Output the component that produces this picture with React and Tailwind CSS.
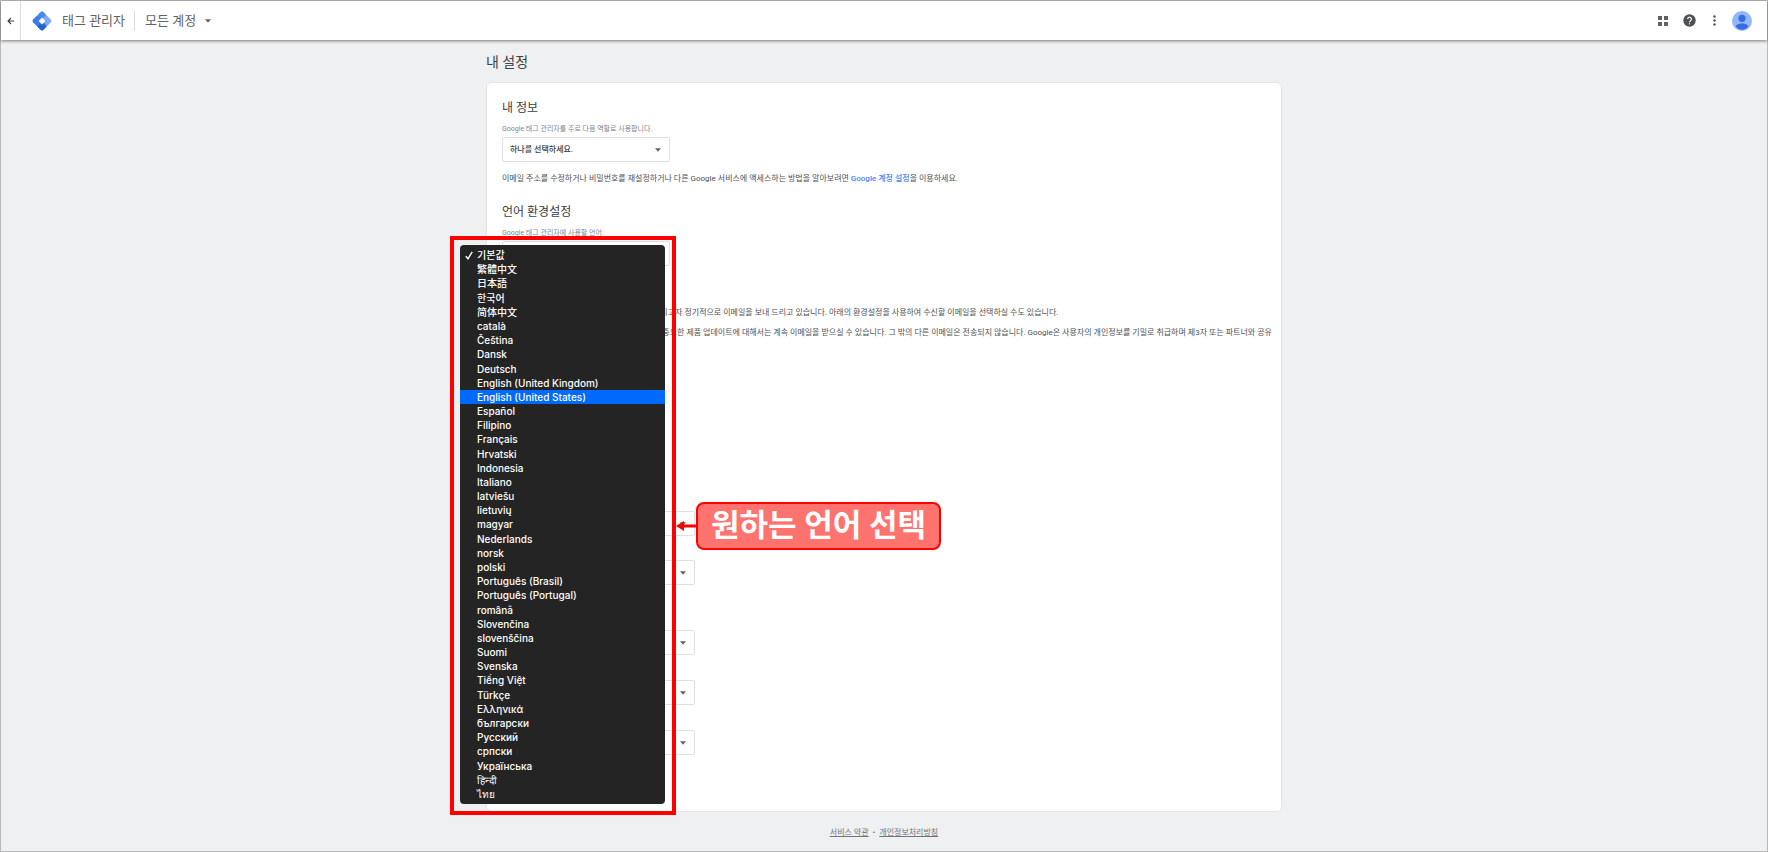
const languages = [
  '기본값', '繁體中文', '日本語', '한국어', '简体中文', 'català', 'Čeština', 'Dansk', 'Deutsch',
  'English (United Kingdom)', 'English (United States)', 'Español', 'Filipino', 'Français',
  'Hrvatski', 'Indonesia', 'Italiano', 'latviešu', 'lietuvių', 'magyar', 'Nederlands', 'norsk',
  'polski', 'Português (Brasil)', 'Português (Portugal)', 'română', 'Slovenčina', 'slovenščina',
  'Suomi', 'Svenska', 'Tiếng Việt', 'Türkçe', 'Ελληνικά', 'български', 'Русский', 'српски',
  'Українська', 'हिन्दी', 'ไทย',
];

function Caret({ className }) {
  return (
    <svg className={className} width="6" height="4" viewBox="0 0 6 4" aria-hidden="true">
      <path d="M0 0.3h6L3 3.7z" fill="#5f6368" />
    </svg>
  );
}

function SelectBox({ id, label, text = '', className = '' }) {
  return (
    <div className={`relative h-[25px] ${className}`}>
      <select
        id={id}
        aria-label={label}
        className="block h-full w-full appearance-none rounded-[2px] border border-[#e0e0e0] bg-white pl-[7px] text-[8px] font-medium text-[#3c4043]"
      >
        <option>{text}</option>
      </select>
      <Caret className="pointer-events-none absolute right-[9px] top-[11px]" />
    </div>
  );
}

function Logo() {
  return (
    <svg width="20" height="20" viewBox="0 0 20 20" aria-hidden="true">
      <path d="M8.600 1.200Q10 0 11.400 1.200L18.800 8.600Q20 10 18.800 11.400L14.600 15.600L10 11L10 9L5.400 4.400z" fill="#7eabf8" />
      <path d="M8.600 1.200Q10 0 11.400 1.200L14 4L5 13L1.200 11.400Q0 10 1.200 8.600z" fill="#4a86f5" />
      <path d="M1.200 8.600L5 5L14.800 14.800L11.400 18.800Q10 20 8.600 18.800L1.200 11.400Q0 10 1.200 8.600z" fill="#3b7bf0" />
      <path d="M5.300 15.500L10 12L14.700 15.500L11.400 18.800Q10 20 8.600 18.800z" fill="#2163d6" />
      <path d="M10 6.600L13.400 10L10 13.400L6.600 10z" fill="#fff" />
    </svg>
  );
}

function Header() {
  return (
    <header className="relative flex h-[39px] items-center bg-white text-[13px] text-[#5f6368] shadow-[0_1px_3px_rgba(0,0,0,0.5)]">
      <button aria-label="뒤로" className="flex w-5 items-center justify-center self-stretch border-r border-[#dadce0]">
        <svg width="8" height="8" viewBox="0 0 8 8" fill="none" stroke="#3c4043" aria-hidden="true">
          <path d="M7.2 4H1M4 1L1 4l3 3" strokeWidth="1.1" />
        </svg>
      </button>
      <div className="ml-[11px]"><Logo /></div>
      <span className="ml-[10px]">태그 관리자</span>
      <div className="ml-[9px] h-5 border-l border-[#dadce0]" />
      <button className="ml-[10px] flex items-center gap-[9px]">
        모든 계정 <Caret />
      </button>
      <div className="ml-auto flex items-center pr-[15px]">
        <button aria-label="앱" className="mr-[15px]">
          <svg width="10" height="10" viewBox="0 0 10 10" fill="#5f6368" aria-hidden="true">
            <path d="M0 0h4v4H0zM6 0h4v4H6zM0 6h4v4H0zM6 6h4v4H6z" />
          </svg>
        </button>
        <button aria-label="도움말" className="mr-[17px]">
          <svg width="13" height="13" viewBox="0 0 13 13" aria-hidden="true">
            <circle cx="6.5" cy="6.5" r="6.2" fill="#4d5156" />
            <path d="M4.6 5.1a1.9 1.9 0 1 1 2.9 1.6c-.6.4-1 .7-1 1.5" fill="none" stroke="#fff" strokeWidth="1.2" />
            <path d="M5.9 9.2h1.2v1.2H5.9z" fill="#fff" />
          </svg>
        </button>
        <button aria-label="더보기" className="mr-[16px]">
          <svg width="3" height="11" viewBox="0 0 3 11" fill="#4d5156" aria-hidden="true">
            <circle cx="1.5" cy="1.5" r="1.2" />
            <circle cx="1.5" cy="5.5" r="1.2" />
            <circle cx="1.5" cy="9.5" r="1.2" />
          </svg>
        </button>
        <button aria-label="계정">
          <svg width="20" height="20" viewBox="0 0 20 20" aria-hidden="true">
            <circle cx="10" cy="10" r="10" fill="#8fb8fb" />
            <circle cx="10" cy="7.3" r="3.6" fill="#3b6bdf" />
            <path d="M3.7 15.6C4 13.2 7 12.4 10 12.4s6 .8 6.3 3.2C15 17.2 12.6 18.8 10 18.8s-5-1.600-6.300-3.200z" fill="#3b6bdf" />
          </svg>
        </button>
      </div>
    </header>
  );
}

function LanguageMenu() {
  return (
    <ul
      role="listbox"
      aria-label="언어"
      className="absolute left-[-42px] top-1 grid h-[559px] w-[205px] auto-rows-fr rounded-[4px] bg-[#242424] py-[3px] font-['Inter','Noto_Sans_CJK_KR',sans-serif] text-[10px] font-medium leading-[14px] text-white"
    >
      {languages.map((name, i) => (
        <li
          key={name}
          role="option"
          aria-selected={i === 0}
          className={`flex min-h-0 items-center whitespace-nowrap ${i === 10 ? 'bg-[#006aff]' : ''}`}
        >
          <span className="flex w-[17px] justify-center">
            {i === 0 && (
              <svg width="8" height="9" viewBox="0 0 8 9" fill="none" stroke="#fff" strokeWidth="1.4" aria-hidden="true">
                <path d="M0.800 5.200L3 7.800L7.200 0.800" />
              </svg>
            )}
          </span>
          {name}
        </li>
      ))}
    </ul>
  );
}

function Callout() {
  return (
    <div className="absolute left-[174px] top-[261px] flex items-center">
      <svg width="20" height="12" viewBox="0 0 20 12" fill="#f00" aria-hidden="true">
        <path d="M0 6L8 1v3.600h12v2.800H8V11z" />
      </svg>
      <div className="flex h-12 w-[245px] items-center justify-center whitespace-nowrap rounded-[8px] border-2 border-[#f00] bg-[#ff736f] pb-[2px] text-[31px] font-bold leading-none text-white">
        원하는 언어 선택
      </div>
    </div>
  );
}

export default function App() {
  return (
    <div className="min-h-screen border border-[#b9b9b9] bg-[#eef0f2] font-['Roboto','Noto_Sans_CJK_KR',sans-serif] text-[#3c4043]">
      <Header />
      <main className="mx-auto w-[796px] max-w-full">
        <h1 className="pb-[10px] pt-3 text-[14px] leading-5">내 설정</h1>
        <div className="rounded-[5px] border border-[#e3e5e8] bg-white px-[15px] pb-[56px] pt-[15px] text-[8px] leading-3">
          <section>
            <h2 className="text-[12px] leading-5">내 정보</h2>
            <label htmlFor="role" className="mt-[5px] block text-[7px] text-[#80868b]">
              Google 태그 관리자를 주로 다음 역할로 사용합니다.
            </label>
            <SelectBox id="role" text="하나를 선택하세요." className="mt-[2px] w-[168px]" />
            <p className="mt-[11px] text-[#4d5156]">
              이메일 주소를 수정하거나 비밀번호를 재설정하거나 다른 Google 서비스에 액세스하는 방법을 알아보려면{' '}
              <a href="#account" className="font-medium text-[#4285f4]">Google 계정 설정</a>을 이용하세요.
            </p>
          </section>
          <section className="mt-[17px]">
            <h2 className="text-[12px] leading-5">언어 환경설정</h2>
            <label htmlFor="language" className="mt-[5px] block text-[7px] text-[#80868b]">
              Google 태그 관리자에 사용할 언어:
            </label>
            <div className="relative z-10 mt-[2px] w-[168px]">
              <SelectBox id="language" />
              <LanguageMenu />
              <div className="pointer-events-none absolute left-[-52px] top-[-5px] h-[579px] w-[226px] border-4 border-[#f00]" />
              <Callout />
            </div>
          </section>
          <section className="mt-[41px]">
            <div className="whitespace-nowrap pl-[151px] text-[#4d5156]">
              <p>드리고자 정기적으로 이메일을 보내 드리고 있습니다. 아래의 환경설정을 사용하여 수신할 이메일을 선택하실 수도 있습니다.</p>
              <p className="mt-[8px]">는 중요한 제품 업데이트에 대해서는 계속 이메일을 받으실 수 있습니다. 그 밖의 다른 이메일은 전송되지 않습니다. Google은 사용자의 개인정보를 기밀로 취급하며 제3자 또는 파트너와 공유</p>
            </div>
            <div className="mt-[172px] flex flex-col gap-[24px]">
              <SelectBox label="이메일 환경설정" className="w-[193px]" />
              <SelectBox label="이메일 수신 언어" className="w-[193px]" />
            </div>
            <div className="mt-[45px] flex flex-col gap-[25px]">
              <SelectBox label="알림 1" className="w-[193px]" />
              <SelectBox label="알림 2" className="w-[193px]" />
              <SelectBox label="알림 3" className="w-[193px]" />
            </div>
          </section>
        </div>
      </main>
      <footer className="flex justify-center gap-[4px] pt-[15px] text-[8px] leading-3 text-[#70757a]">
        <a href="#terms" className="underline">서비스 약관</a>
        <span>•</span>
        <a href="#privacy" className="underline">개인정보처리방침</a>
      </footer>
    </div>
  );
}
